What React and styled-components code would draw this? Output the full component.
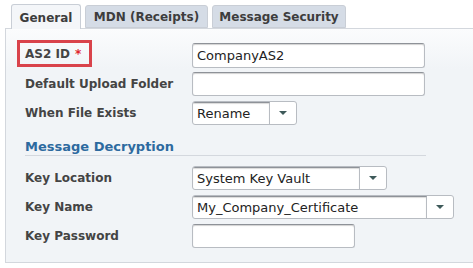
import React from 'react'
import styled, { createGlobalStyle } from 'styled-components'

const Global = createGlobalStyle`
  html, body {
    margin: 0;
    padding: 0;
    background: #ffffff;
    font-family: "DejaVu Sans", Verdana, sans-serif;
  }
`

const Page = styled.div`
  width: 473px;
  height: 268px;
  display: flex;
  flex-direction: column;
  overflow: hidden;
`

const TabBar = styled.div`
  display: flex;
  gap: 4px;
  padding: 4px 0 0 11px;
  height: 24px;
  position: relative;
  z-index: 1;
`

const Tab = styled.div`
  box-sizing: border-box;
  width: ${p => p.w}px;
  height: ${p => (p.active ? 25 : 23)}px;
  margin-top: ${p => (p.active ? 0 : 1)}px;
  border: 1px solid #c9ced6;
  border-bottom: ${p => (p.active ? 'none' : '1px solid #c9ced6')};
  border-radius: 3px 3px 0 0;
  background: ${p => (p.active ? '#f4f6f9' : '#d5dce6')};
  color: #3d3d3d;
  font-size: 12px;
  font-weight: bold;
  display: flex;
  align-items: center;
  justify-content: center;
  padding-top: 1px;
`

const Panel = styled.div`
  box-sizing: border-box;
  margin-left: 5px;
  height: 235px;
  border: 1px solid #d3d7dd;
  border-right: none;
  background: linear-gradient(#fbfcfd, #f1f4f7 40px, #f1f4f7);
  padding: 14px 0 0 19px;
`

const Grid = styled.div`
  display: grid;
  grid-template-columns: 167px auto;
  grid-auto-rows: 24px;
  row-gap: ${p => p.gap}px;
  align-items: center;
`

const Label = styled.div`
  font-size: 12px;
  font-weight: bold;
  color: #444444;
  white-space: nowrap;
`

const Required = styled.div`
  box-sizing: border-box;
  width: 75px;
  height: 27px;
  margin: -3px 0 0 -8px;
  border: 3px solid #d9434b;
  display: flex;
  align-items: center;
  padding-left: 5px;
  font-size: 12px;
  font-weight: bold;
  color: #444444;
`

const Star = styled.span`
  color: #e0262d;
  margin-left: 5px;
`

const Input = styled.div`
  box-sizing: border-box;
  width: ${p => p.w}px;
  height: ${p => p.h || 24}px;
  background: #ffffff;
  border: 1px solid #b8bcc2;
  border-top-color: #8e9298;
  border-radius: 3px;
  box-shadow: inset 0 1px 1px rgba(0, 0, 0, 0.18);
  font-size: 13px;
  color: #222;
  display: flex;
  align-items: center;
  padding-left: 4px;
`

const Select = styled.div`
  box-sizing: border-box;
  width: ${p => p.w}px;
  height: 24px;
  display: flex;
  border: 1px solid #b8bcc2;
  border-radius: 3px;
  background: #ffffff;
  overflow: hidden;
`

const SelectValue = styled.div`
  flex: 1;
  border-right: 1px solid #b8bcc2;
  border-top: 1px solid #8e9298;
  box-shadow: inset 0 1px 1px rgba(0, 0, 0, 0.15);
  font-size: 13px;
  color: #222;
  display: flex;
  align-items: center;
  padding-left: 4px;
`

const Arrow = styled.div`
  width: 26px;
  display: flex;
  align-items: center;
  justify-content: center;
  &::after {
    content: '';
    border-left: 4px solid transparent;
    border-right: 4px solid transparent;
    border-top: 4px solid #3e5a5a;
  }
`

const Section = styled.div`
  margin: 14px 0 10px 0;
  width: 401px;
  border-bottom: 1px solid #d4d8de;
  padding-bottom: 1px;
  font-size: 13px;
  font-weight: bold;
  color: #2d6a9f;
`

function Dropdown({ w, value }) {
  return (
    <Select w={w}>
      <SelectValue>{value}</SelectValue>
      <Arrow />
    </Select>
  )
}

export default function App() {
  return (
    <Page>
      <Global />
      <TabBar>
        <Tab w={70} active>General</Tab>
        <Tab w={123}>MDN (Receipts)</Tab>
        <Tab w={134}>Message Security</Tab>
      </TabBar>
      <Panel>
        <Grid gap={5}>
          <Required>AS2 ID<Star>*</Star></Required>
          <Input w={233} h={25}>CompanyAS2</Input>
          <Label>Default Upload Folder</Label>
          <Input w={233} />
          <Label>When File Exists</Label>
          <Dropdown w={105} value="Rename" />
        </Grid>
        <Section>Message Decryption</Section>
        <Grid gap={5}>
          <Label>Key Location</Label>
          <Dropdown w={195} value="System Key Vault" />
          <Label>Key Name</Label>
          <Dropdown w={262} value="My_Company_Certificate" />
          <Label>Key Password</Label>
          <Input w={163} />
        </Grid>
      </Panel>
    </Page>
  )
}
